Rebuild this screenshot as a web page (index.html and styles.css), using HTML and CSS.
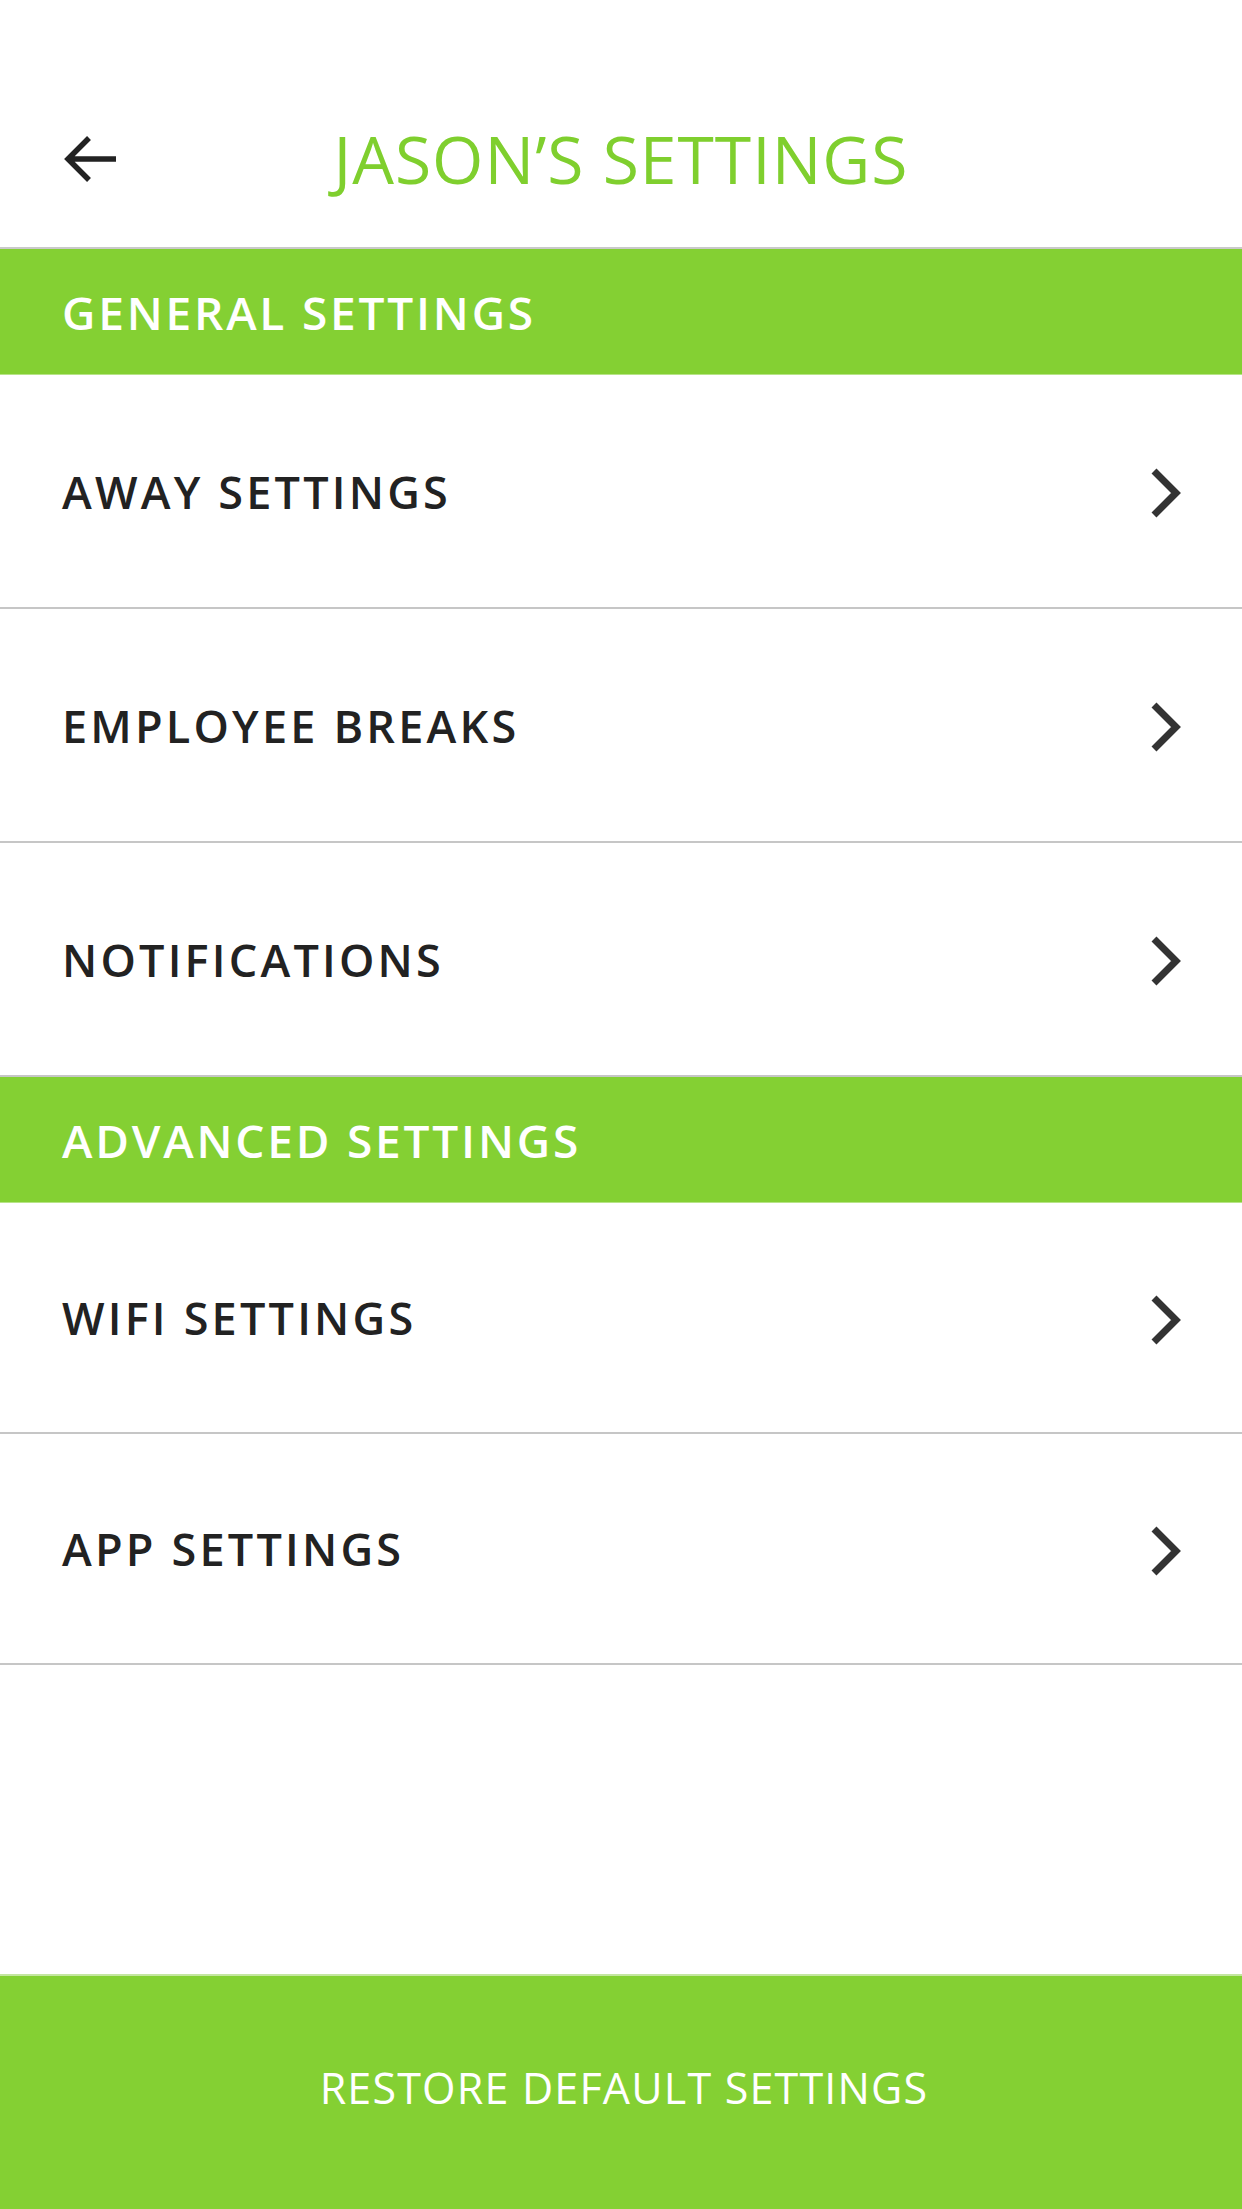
FILE: index.html
```html
<!DOCTYPE html>
<html lang="en">
<head>
<meta charset="utf-8">
<title>Jason's Settings</title>
<link rel="stylesheet" href="styles.css">
</head>
<body>
<div class="screen">
  <header class="topbar">
    <div class="back">
      <svg class="back-icon" width="56" height="48" viewBox="0 0 56 48" aria-hidden="true">
        <path d="M5 24 H53 M26 3 L5 24 L26 45" fill="none" stroke="#222" stroke-width="5.5" stroke-linecap="butt" stroke-linejoin="miter"/>
      </svg>
    </div>
    <h1 class="title">JASON’S SETTINGS</h1>
    <div class="spacer-col"></div>
  </header>

  <section class="group group-general">
    <div class="section-head">GENERAL SETTINGS</div>
    <a class="row" href="#"><span class="row-label">AWAY SETTINGS</span><svg class="chev" width="36" height="56" viewBox="0 0 36 56" aria-hidden="true"><path d="M6 6 L28 28 L6 50" fill="none" stroke="#333" stroke-width="7"/></svg></a>
    <a class="row" href="#"><span class="row-label">EMPLOYEE BREAKS</span><svg class="chev" width="36" height="56" viewBox="0 0 36 56" aria-hidden="true"><path d="M6 6 L28 28 L6 50" fill="none" stroke="#333" stroke-width="7"/></svg></a>
    <a class="row" href="#"><span class="row-label">NOTIFICATIONS</span><svg class="chev" width="36" height="56" viewBox="0 0 36 56" aria-hidden="true"><path d="M6 6 L28 28 L6 50" fill="none" stroke="#333" stroke-width="7"/></svg></a>
  </section>

  <section class="group group-advanced">
    <div class="section-head">ADVANCED SETTINGS</div>
    <a class="row" href="#"><span class="row-label">WIFI SETTINGS</span><svg class="chev" width="36" height="56" viewBox="0 0 36 56" aria-hidden="true"><path d="M6 6 L28 28 L6 50" fill="none" stroke="#333" stroke-width="7"/></svg></a>
    <a class="row" href="#"><span class="row-label">APP SETTINGS</span><svg class="chev" width="36" height="56" viewBox="0 0 36 56" aria-hidden="true"><path d="M6 6 L28 28 L6 50" fill="none" stroke="#333" stroke-width="7"/></svg></a>
  </section>

  <div class="fill"></div>

  <button class="restore" type="button">RESTORE DEFAULT SETTINGS</button>
</div>
</body>
</html>
```

FILE: styles.css
```css
* {
  box-sizing: border-box;
}

html, body {
  margin: 0;
  padding: 0;
  background: #ffffff;
}

body {
  font-family: "Open Sans", "Noto Sans", "Liberation Sans", sans-serif;
}

.screen {
  width: 1242px;
  height: 2209px;
  display: flex;
  flex-direction: column;
  overflow: hidden;
}

.topbar {
  height: 249px;
  flex: none;
  padding-top: 70px;
  display: grid;
  grid-template-columns: 1fr auto 1fr;
  align-items: center;
  border-bottom: 2px solid #c9c9c9;
}

.back {
  padding-left: 63px;
  display: flex;
  align-items: center;
}

.back-icon {
  display: block;
}

.title {
  margin: 0;
  font-size: 66px;
  font-weight: 400;
  color: #7fcf2e;
  letter-spacing: 1px;
  line-height: 1;
  padding-bottom: 2px;
}

.group {
  flex: none;
  display: flex;
  flex-direction: column;
}

.section-head {
  flex: none;
  height: 126px;
  background: #84d033;
  color: #ffffff;
  font-size: 46px;
  font-weight: 600;
  letter-spacing: 2.8px;
  padding-left: 62px;
  display: flex;
  align-items: center;
  border-bottom: 1px solid #b7e487;
}

.row {
  flex: none;
  height: 234px;
  display: flex;
  align-items: center;
  justify-content: space-between;
  padding: 0 58px 0 62px;
  border-bottom: 2px solid #c6c6c6;
  text-decoration: none;
  color: #222222;
}

.group-advanced .row {
  height: 231px;
}

.row-label {
  font-size: 45px;
  font-weight: 600;
  letter-spacing: 3.2px;
  color: #222222;
}

.chev {
  display: block;
  margin-top: 4px;
}

.fill {
  flex: 1;
}

.restore {
  flex: none;
  height: 235px;
  width: 100%;
  margin: 0;
  border: 0;
  border-top: 2px solid #c4e6a0;
  background: #84d033;
  color: #ffffff;
  font-family: "Open Sans", "Noto Sans", "Liberation Sans", sans-serif;
  font-size: 43px;
  font-weight: 400;
  letter-spacing: 1.2px;
  padding: 0 0 10px 6px;
  cursor: pointer;
}
```
